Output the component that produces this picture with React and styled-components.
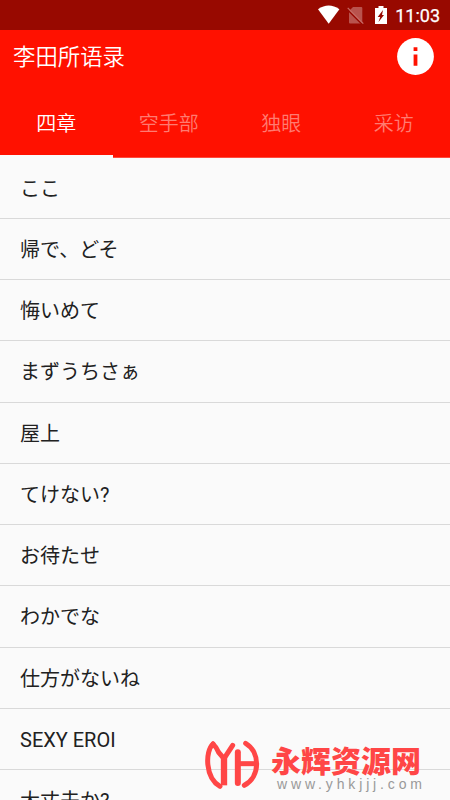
import React from "react";
import styled, { createGlobalStyle } from "styled-components";

const GlobalStyle = createGlobalStyle`
  * { box-sizing: border-box; }
  body {
    margin: 0;
    background: #fafafa;
    overflow: hidden;
    font-family: Roboto, "Noto Sans CJK SC", sans-serif;
  }
`;

const Screen = styled.div`
  position: relative;
  display: flex;
  flex-direction: column;
  width: 450px;
  height: 800px;
  overflow: hidden;
  background: #fafafa;
`;

const StatusBar = styled.div`
  display: flex;
  align-items: center;
  justify-content: flex-end;
  flex: none;
  height: 30px;
  padding-right: 10px;
  background: #980900;
  color: #fff;
`;

const StatusIcons = styled.svg`
  width: 74px;
  height: 30px;
  margin-right: 5px;
`;

const Clock = styled.span`
  width: 45px;
  font-size: 18px;
  line-height: 30px;
  font-weight: 400;
  -webkit-text-stroke: 0.25px #fff;
  text-align: right;
  white-space: nowrap;
  padding-top: 1px;
`;

const Header = styled.header`
  flex: none;
  height: 127.5px;
  background: #ff1100;
`;

const Toolbar = styled.div`
  display: flex;
  align-items: center;
  justify-content: space-between;
  height: 53px;
  padding: 0 16px 0 13px;
`;

const Title = styled.h1`
  margin: 0;
  color: #fff;
  font-size: 22.4px;
  font-weight: 350;
  line-height: 32px;
`;

const InfoIcon = styled.svg`
  width: 37px;
  height: 37px;
`;

const Tabs = styled.nav`
  display: grid;
  grid-template-columns: repeat(4, 1fr);
  height: 74.5px;
`;

const Tab = styled.div`
  display: flex;
  justify-content: center;
  padding-top: 26px;
  font-size: 20px;
  font-weight: 350;
  line-height: 30px;
  color: ${(p) => (p.$active ? "#fff" : "#ff7b71")};
  border-bottom: ${(p) => (p.$active ? "3px solid #fafafa" : "1px solid #ff4a3d")};
`;

const List = styled.ul`
  margin: 0;
  padding: 0;
  list-style: none;
`;

const Row = styled.li`
  height: 61.25px;
  padding: 16px 20px 0;
  border-bottom: 1px solid #d9d9d9;
  color: #212121;
  font-size: 20px;
  line-height: 30px;
  font-family: Roboto, "Noto Sans CJK JP", sans-serif;
`;

const Watermark = styled.div`
  position: absolute;
  left: 203px;
  top: 739px;
  display: flex;
`;

const Logo = styled.svg`
  width: 58px;
  height: 51px;
`;

const Brand = styled.div`
  display: flex;
  flex-direction: column;
  padding: 6px 0 0 10px;
`;

const BrandName = styled.span`
  height: 31px;
  color: #ff4646;
  font-family: "Noto Sans CJK SC", sans-serif;
  font-size: 30px;
  font-weight: 900;
  line-height: 29px;
`;

const BrandUrl = styled.span`
  padding-left: 6px;
  color: #999;
  font-family: "Liberation Sans", sans-serif;
  font-size: 14px;
  line-height: 16px;
  letter-spacing: 3.85px;
  white-space: nowrap;
`;

const tabs = ["四章", "空手部", "独眼", "采访"];

const phrases = [
  "ここ",
  "帰で、どそ",
  "悔いめて",
  "まずうちさぁ",
  "屋上",
  "てけない?",
  "お待たせ",
  "わかでな",
  "仕方がないね",
  "SEXY EROI",
  "大丈夫か?",
];

export default function App() {
  return (
    <>
      <GlobalStyle />
      <Screen>
        <StatusBar>
          <StatusIcons viewBox="316 0 74 30">
            <path d="M318 9.3Q328.7 1.8 339.4 9.3L328.7 23.7Z" fill="#fff" />
            <path d="M353 7h8.3q1 0 1 1v14.5q0 1-1 1H350q-1 0-1-1V11z" fill="#b9534d" />
            <path d="M347.3 9.5l15 15" stroke="#980900" strokeWidth="1.5" />
            <path d="M347.7 7.9l15.6 15.7" stroke="#c76b65" strokeWidth="1.3" />
            <path d="M378.5 6h5v2h3.5v16h-12V8h3.5z" fill="#fff" />
            <path d="M383 10l-5.3 7h2.5l-1.7 5 5.5-7H382z" fill="#980900" />
          </StatusIcons>
          <Clock>11:03</Clock>
        </StatusBar>
        <Header>
          <Toolbar>
            <Title>李田所语录</Title>
            <InfoIcon viewBox="0 0 37 37">
              <circle cx="18.5" cy="18.5" r="18.4" fill="#fff" />
              <path d="M16.6 9.3h3.8v3.7h-3.8zM16.6 16.5h3.8v11.2h-3.8z" fill="#ff1100" />
            </InfoIcon>
          </Toolbar>
          <Tabs>
            {tabs.map((label, i) => (
              <Tab key={label} $active={i === 0}>{label}</Tab>
            ))}
          </Tabs>
        </Header>
        <List>
          {phrases.map((text) => (
            <Row key={text} lang="ja">{text}</Row>
          ))}
        </List>
        <Watermark>
          <Logo viewBox="24 27 174 153" fill="none" stroke="#ff4646" strokeWidth="15">
            <path d="M54 42C30 64 30 143 75 169" strokeLinecap="round" />
            <path d="M152 40C196 66 197 140 148 166" strokeLinecap="round" />
            <path d="M54 42Q65 52 71 67L87 86L113 46" strokeLinecap="round" />
            <path d="M87 76V166" strokeWidth="19" />
            <path d="M128.5 67V159" strokeWidth="18" strokeLinecap="round" />
            <path d="M128 101H182" />
          </Logo>
          <Brand>
            <BrandName>永辉资源网</BrandName>
            <BrandUrl>www.yhkjjj.com</BrandUrl>
          </Brand>
        </Watermark>
      </Screen>
    </>
  );
}
